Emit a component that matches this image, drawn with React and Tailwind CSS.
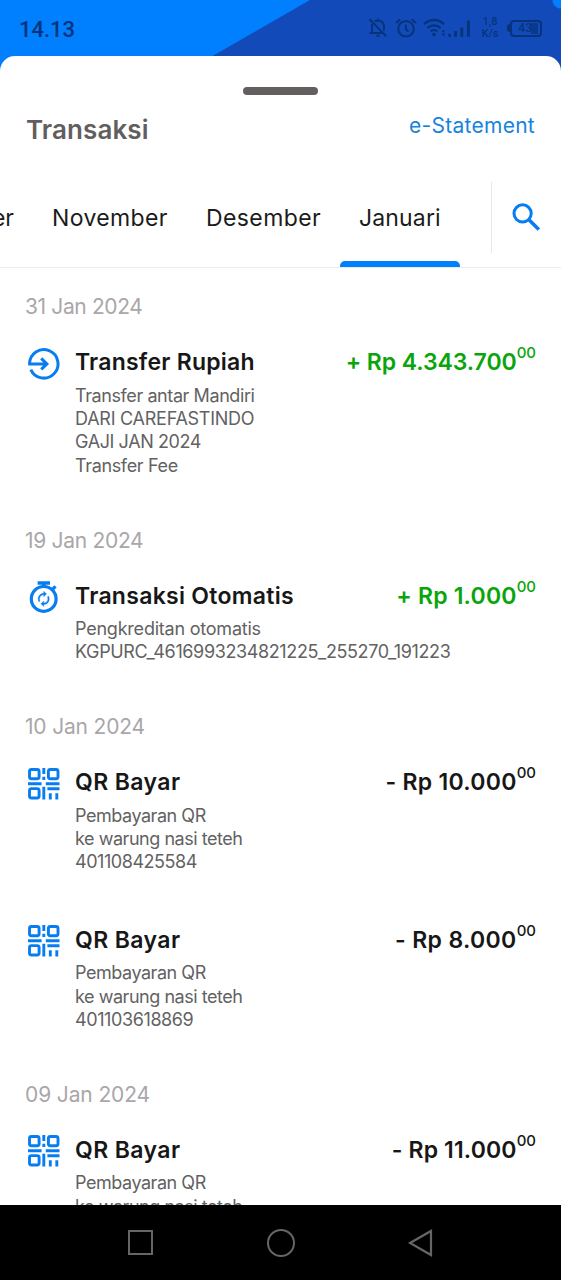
import React from "react";

const groups = [
  {
    date: "31 Jan 2024",
    dateClass: "tracking-[-0.37px]",
    items: [
      {
        icon: "transfer",
        title: "Transfer Rupiah",
        titleClass: "tracking-[0.23px]",
        amount: "+ Rp 4.343.700",
        amountClass: "text-[#0aa50a] tracking-[-0.07px]",
        lines: [
          { text: "Transfer antar Mandiri", className: "tracking-[-0.41px]" },
          { text: "DARI CAREFASTINDO", className: "tracking-[-0.25px]" },
          { text: "GAJI JAN 2024", className: "tracking-[-0.4px]" },
          { text: "Transfer Fee", className: "tracking-[-0.35px]" },
        ],
      },
    ],
  },
  {
    date: "19 Jan 2024",
    dateClass: "tracking-[-0.3px]",
    items: [
      {
        icon: "auto",
        title: "Transaksi Otomatis",
        titleClass: "tracking-[0.29px]",
        amount: "+ Rp 1.000",
        amountClass: "text-[#0aa50a] tracking-[0.2px]",
        lines: [
          { text: "Pengkreditan otomatis", className: "tracking-[-0.22px]" },
          { text: "KGPURC_4616993234821225_255270_191223", className: "tracking-[-0.38px]" },
        ],
      },
    ],
  },
  {
    date: "10 Jan 2024",
    dateClass: "tracking-[-0.18px]",
    items: [
      {
        icon: "qr",
        title: "QR Bayar",
        titleClass: "tracking-[0.4px]",
        amount: "- Rp 10.000",
        amountClass: "tracking-[0.28px]",
        lines: [
          { text: "Pembayaran QR", className: "tracking-[-0.46px]" },
          { text: "ke warung nasi teteh", className: "tracking-[-0.46px]" },
          { text: "401108425584", className: "tracking-[-0.45px]" },
        ],
      },
      {
        icon: "qr",
        title: "QR Bayar",
        titleClass: "tracking-[0.4px]",
        amount: "- Rp 8.000",
        amountClass: "tracking-[0.35px]",
        lines: [
          { text: "Pembayaran QR", className: "tracking-[-0.46px]" },
          { text: "ke warung nasi teteh", className: "tracking-[-0.46px]" },
          { text: "401103618869", className: "tracking-[-0.4px]" },
        ],
      },
    ],
  },
  {
    date: "09 Jan 2024",
    dateClass: "tracking-[-0.12px]",
    items: [
      {
        icon: "qr",
        title: "QR Bayar",
        titleClass: "tracking-[0.4px]",
        amount: "- Rp 11.000",
        amountClass: "tracking-[0.14px]",
        lines: [
          { text: "Pembayaran QR", className: "tracking-[-0.46px]" },
          { text: "ke warung nasi teteh", className: "tracking-[-0.46px]" },
        ],
      },
    ],
  },
];

function TransferIcon() {
  return (
    <svg viewBox="0 0 32 32" className="h-8 w-8" fill="none" stroke="#087df1" strokeWidth="3">
      <path d="M1.6 15.9A14.2 14.2 0 1 1 2.8 21.6" />
      <path d="M0.2 15.9H18.5M13.2 10.4l5.7 5.5-5.7 5.5" />
    </svg>
  );
}

function AutoIcon() {
  return (
    <svg viewBox="0 0 32 32" className="h-8 w-8" fill="none" stroke="#087df1">
      <circle cx="15.7" cy="17.9" r="12.4" strokeWidth="3.2" />
      <path d="M9.6 2h12.4M15.8 2v4" strokeWidth="3.6" />
      <path d="M24.4 8.4l3.1-3.1" strokeWidth="3.2" />
      <path
        transform="translate(7.3 9.5) scale(0.7)"
        fill="#087df1"
        strokeWidth="0.5"
        d="M12 6v3l4-4-4-4v3c-4.42 0-8 3.58-8 8 0 1.57.46 3.03 1.24 4.26L6.7 14.8A5.87 5.87 0 0 1 6 12c0-3.31 2.69-6 6-6zm6.76 1.74L17.3 9.2c.44.84.7 1.79.7 2.8 0 3.31-2.69 6-6 6v-3l-4 4 4 4v-3c4.42 0 8-3.58 8-8 0-1.57-.46-3.03-1.24-4.26z"
      />
    </svg>
  );
}

function QrIcon() {
  return (
    <svg viewBox="0 0 32 32" className="h-8 w-8" fill="none" stroke="#087df1" strokeWidth="2.9">
      <rect x="1.5" y="1.5" width="9.6" height="9.2" rx="2" />
      <rect x="20.4" y="1.5" width="9.6" height="9.2" rx="2" />
      <rect x="1.5" y="20.6" width="9.6" height="9.4" rx="2" />
      <path d="M15.8 0v6M15.8 8.8v3.2M0 15.8h13.6M17.8 15.8h13.7M15.8 18.8v12.7M19.4 20.8h12.1M22.3 25.2v6.3M28.8 25.2v6.3" />
    </svg>
  );
}

const icons = { transfer: TransferIcon, auto: AutoIcon, qr: QrIcon };

function StatusBar() {
  return (
    <div className="flex h-14 items-center justify-between pl-[19px] pr-[19px] text-[#07337a]">
      <span className="pt-[3px] font-[Roboto] text-[22px] leading-none font-medium">14.13</span>
      <div className="flex items-center">
        {/* Muted bell */}
        <svg viewBox="0 0 20 20" className="mr-[7px] h-5 w-5" fill="none" stroke="currentColor" strokeWidth="2">
          <path d="M1.5 1.2L18.2 18.2M4 6V14.6M16 12.4V8.4C16 5 13.6 2.6 10 2.4 8.6 2.4 7.6 2.8 6.6 3.4M1.6 15H15M8.4 17.8h3.2M10 .6v2" />
        </svg>
        {/* Alarm */}
        <svg viewBox="0 0 22 20" className="mr-[6px] h-5 w-[22px]" fill="none" stroke="currentColor" strokeWidth="2">
          <circle cx="11" cy="10.8" r="7.8" />
          <path d="M10.8 6.6v4.6l2.6 2.2M1.2 5l4-3.8M20.8 5l-4-3.8" />
        </svg>
        {/* Wifi */}
        <svg viewBox="0 0 24 20" className="h-5 w-6" fill="none" stroke="currentColor" strokeWidth="2.3">
          <path d="M1 6.2a14 14 0 0 1 20 0M4.4 10a9.4 9.4 0 0 1 13.2 0M7.7 13.4a4.8 4.8 0 0 1 6.6 0" />
          <circle cx="11" cy="16.6" r="1.8" fill="currentColor" stroke="none" />
          <path d="M20.4 12.2v2M20.4 15.4v2" strokeWidth="2.4" />
        </svg>
        {/* Signal */}
        <svg viewBox="0 0 25 20" className="mr-[9px] h-5 w-[25px]" fill="none" stroke="currentColor" strokeWidth="2.9">
          <path d="M2.6 16v2.8M8.6 13v5.8M14.8 9.4v9.4M21.4 2.4v16.4" />
        </svg>
        <div className="mr-[8px] flex w-[18px] flex-col items-center font-[Roboto] text-[11px] leading-[12px] font-medium">
          <span>1,8</span>
          <span>K/s</span>
        </div>
        {/* Battery */}
        <div className="flex items-center">
          <div className="h-[8px] w-[3px] rounded-l-sm bg-current" />
          <div className="flex h-[17px] w-8 items-center justify-end rounded-[4px] border-2 border-current pr-[2px]">
            <span className="font-[Roboto] text-[12px] leading-none font-medium">43</span>
            <span className="-ml-px h-[11px] w-[7px] bg-current opacity-70" />
          </div>
        </div>
      </div>
    </div>
  );
}

function Tabs() {
  return (
    <div className="relative flex h-[86px] border-b border-[#ececec] text-[23px] text-[#1b1b1b]">
      <div className="flex h-[71px] w-[492px] items-center overflow-hidden border-r border-[#e8e8e8] pt-[2px] whitespace-nowrap">
        <div className="flex w-[14px] shrink-0 justify-end">
          <span>er</span>
        </div>
        <span className="ml-[38px] w-[116px] shrink-0 tracking-[0.38px]">November</span>
        <span className="ml-[38px] w-[115px] shrink-0 tracking-[0.4px]">Desember</span>
        <span className="ml-[38px] w-[82px] shrink-0 tracking-[0.15px]">Januari</span>
      </div>
      <svg viewBox="0 0 28 28" className="mt-[21px] ml-5 h-7 w-7" fill="none" stroke="#087df1" strokeWidth="3">
        <circle cx="10.6" cy="10.4" r="8.6" />
        <path d="M17.2 17L26.8 26.6" strokeWidth="3.6" />
      </svg>
      <div className="absolute bottom-0 left-[340px] h-[6px] w-[120px] rounded-t-[5px] bg-[#007fff]" />
    </div>
  );
}

function Transaction({ item }) {
  const Icon = icons[item.icon];
  return (
    <div className="flex pb-[51.4px]">
      <div className="mt-[0.5px] ml-[3px] w-[47px] shrink-0">
        <Icon />
      </div>
      <div className="min-w-0 flex-1">
        <div className="flex justify-between text-[23px] leading-[30px] font-semibold whitespace-nowrap text-[#171717]">
          <h3 className={item.titleClass}>{item.title}</h3>
          <div className="flex">
            <span className={item.amountClass}>{item.amount}</span>
            <span
              className={`text-[15px] leading-3 font-medium ${item.amount.startsWith("+") ? "text-[#0aa50a]" : ""}`}
            >
              00
            </span>
          </div>
        </div>
        <div className="mt-[6.5px] text-[18px] leading-[23.33px] whitespace-nowrap text-[#626262]">
          {item.lines.map((line) => (
            <p key={line.text} className={line.className}>
              {line.text}
            </p>
          ))}
        </div>
      </div>
    </div>
  );
}

function NavBar() {
  return (
    <div className="flex h-[75px] items-center justify-center gap-[113.5px] bg-black">
      <div className="h-[25px] w-[25px] border-2 border-[#666]" />
      <div className="h-7 w-7 rounded-full border-2 border-[#666]" />
      <svg viewBox="0 0 25 28" className="h-7 w-[25px]" fill="none" stroke="#666" strokeWidth="2.2">
        <path d="M2 14L23 2v24z" />
      </svg>
    </div>
  );
}

export default function App() {
  return (
    <div className="flex h-[1280px] w-[561px] flex-col overflow-hidden bg-[radial-gradient(circle_at_100%_0,#007fff_8px,transparent_9px),linear-gradient(150.1deg,#007fff_154px,#124bb9_155px)] font-[Inter,sans-serif]">
      <StatusBar />
      <main className="flex min-h-0 flex-1 flex-col overflow-hidden rounded-t-[15px] bg-white">
        <div className="mx-auto mt-[31px] h-2 w-[75px] shrink-0 rounded-full bg-[#635f5f]" />
        <header className="flex h-[87px] shrink-0 items-start justify-between pt-[19px] pr-[26px] pl-[26px]">
          <h1 className="text-[26px] leading-8 font-semibold tracking-[0.1px] text-[#625e5e]">Transaksi</h1>
          <a href="#" className="text-[21px] leading-6 tracking-[0.27px] text-[#1684dc]">e-Statement</a>
        </header>
        <Tabs />
        <div className="min-h-0 flex-1 overflow-hidden pt-[27.3px] pr-[25px] pl-[25px]">
          {groups.map((group) => (
            <section key={group.date}>
              <h2 className="mb-7 text-[21px] leading-6 text-[#aaa6aa]">
                <span className={group.dateClass}>{group.date}</span>
              </h2>
              {group.items.map((item, idx) => (
                <Transaction key={idx} item={item} />
              ))}
            </section>
          ))}
        </div>
      </main>
      <NavBar />
    </div>
  );
}
